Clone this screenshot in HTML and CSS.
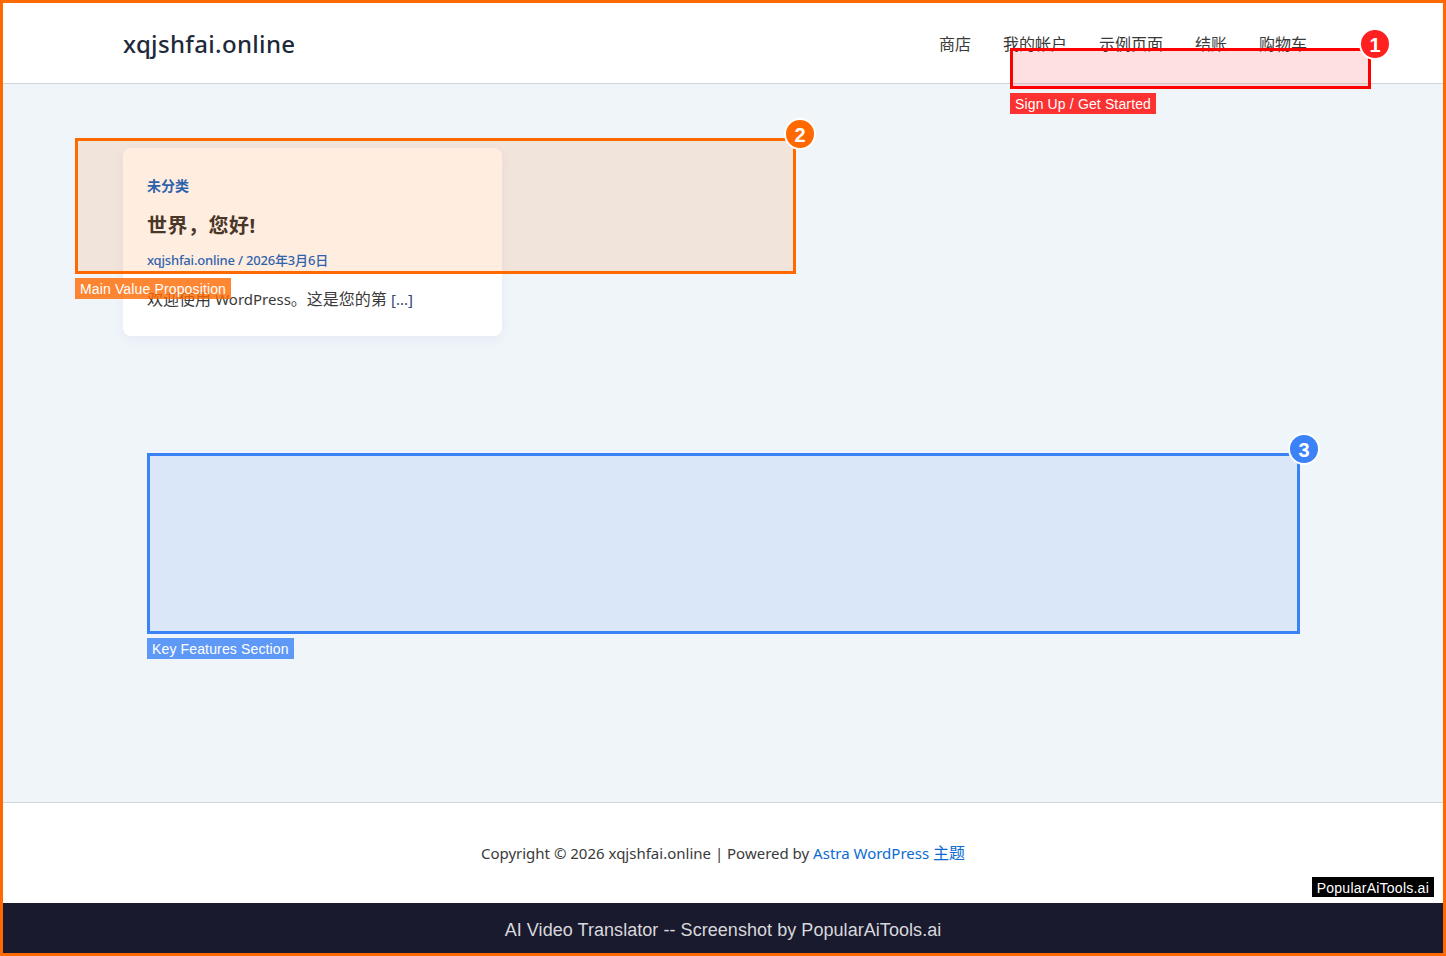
FILE: index.html
```html
<!DOCTYPE html>
<html lang="zh-CN">
<head>
<meta charset="utf-8">
<title>xqjshfai.online</title>
<link rel="stylesheet" href="styles.css">
</head>
<body>
<div class="page">
  <header class="site-header">
    <a class="logo" href="#">xqjshfai.online</a>
    <nav class="nav">
      <a href="#">商店</a>
      <a href="#">我的帐户</a>
      <a href="#">示例页面</a>
      <a href="#">结账</a>
      <a href="#">购物车</a>
    </nav>
  </header>
  <main class="content">
    <article class="card">
      <a class="category" href="#">未分类</a>
      <h2 class="title">世界，您好!</h2>
      <p class="meta">xqjshfai.online / 2026年3月6日</p>
      <p class="excerpt">欢迎使用 <span class="latin">WordPress</span>。这是您的第 <span class="more">[...]</span></p>
    </article>
  </main>
  <footer class="site-footer">
    <p>Copyright © 2026 xqjshfai.online | Powered by <a href="#">Astra WordPress <span class="cjk">主题</span></a></p>
  </footer>
  <div class="caption">AI Video Translator -- Screenshot by PopularAiTools.ai</div>
</div>

<div class="note note-red">
  <span class="badge">1</span>
  <span class="note-label">Sign Up / Get Started</span>
</div>
<div class="note note-orange">
  <span class="badge">2</span>
  <span class="note-label">Main Value Proposition</span>
</div>
<div class="note note-blue">
  <span class="badge">3</span>
  <span class="note-label">Key Features Section</span>
</div>
<div class="watermark">PopularAiTools.ai</div>
<div class="frame"></div>
</body>
</html>
```
FILE: styles.css
```css
* { box-sizing: border-box; }
html, body { margin: 0; padding: 0; }
body {
  position: relative;
  width: 1446px;
  height: 956px;
  overflow: hidden;
  font-family: "Noto Sans", "Noto Sans CJK SC", sans-serif;
  color: #3a3a3a;
  background: #f0f5fa;
}
a { text-decoration: none; color: inherit; }
p, h2 { margin: 0; }

.page {
  display: flex;
  flex-direction: column;
  height: 956px;
  padding: 3px;
}

.site-header {
  flex: none;
  height: 81px;
  display: flex;
  align-items: center;
  justify-content: space-between;
  padding: 0 136px 0 120px;
  background: #fff;
  border-bottom: 1px solid #d1d5db;
}
.logo {
  font-size: 24px;
  font-weight: 500;
  letter-spacing: 0.33px;
  color: #1e293b;
}
.nav {
  display: flex;
  gap: 32px;
  margin-top: -1px;
  font-size: 16px;
  color: #3a3a3a;
}

.content {
  flex: 1;
  padding: 64px 120px;
}
.card {
  width: 379px;
  height: 188px;
  padding: 24px;
  background: #fff;
  border-radius: 8px;
  box-shadow: 0 4px 12px rgba(30, 60, 110, 0.05);
}
.category {
  display: block;
  font-size: 14px;
  line-height: 28px;
  font-weight: 600;
  color: #0f62c4;
}
.title {
  margin-top: 12px;
  font-size: 20px;
  line-height: 28px;
  font-weight: 700;
  letter-spacing: 0.5px;
  color: #303030;
}
.meta {
  margin-top: 10px;
  font-size: 13px;
  line-height: 20px;
  font-weight: 500;
  letter-spacing: -0.19px;
  color: #0f62c4;
}
.excerpt {
  margin-top: 17px;
  font-size: 16px;
  line-height: 24px;
  color: #3a3a3a;
}
.latin { font-size: 15px; }
.more { font-size: 15px; color: #2c4a72; }

.site-footer {
  flex: none;
  height: 101px;
  padding-top: 38px;
  background: #fff;
  border-top: 1px solid #d1d5db;
  text-align: center;
  font-size: 15px;
  line-height: 24px;
  color: #3a3a3a;
}
.site-footer a { color: #0d6bd0; }
.cjk { font-size: 16px; }

.caption {
  flex: none;
  height: 50px;
  display: flex;
  align-items: center;
  justify-content: center;
  padding-top: 5px;
  background: #1a1a2e;
  color: #d8d8dc;
  font-family: "Liberation Sans", sans-serif;
  font-size: 18px;
  letter-spacing: 0.05px;
}

.note {
  position: absolute;
  border-style: solid;
  border-width: 3px;
}
.note-red {
  left: 1010px; top: 48px; width: 361px; height: 41px;
  border-color: #ff0000;
  background: rgba(255, 0, 0, 0.12);
  --accent: #ff2020;
  --tag: rgba(255, 0, 0, 0.8);
}
.note-orange {
  left: 75px; top: 138px; width: 721px; height: 136px;
  border-color: #ff6900;
  background: rgba(255, 105, 0, 0.12);
  --accent: #ff6900;
  --tag: rgba(255, 105, 0, 0.8);
}
.note-blue {
  left: 147px; top: 453px; width: 1153px; height: 181px;
  border-color: #3b82f6;
  background: rgba(59, 130, 246, 0.12);
  --accent: #3b82f6;
  --tag: rgba(59, 130, 246, 0.8);
}
.badge {
  position: absolute;
  top: -23px;
  right: -23px;
  width: 32px;
  height: 32px;
  display: flex;
  align-items: center;
  justify-content: center;
  padding-top: 2px;
  border: 2px solid #fff;
  border-radius: 50%;
  background: var(--accent);
  color: #fff;
  font-family: "Liberation Sans", sans-serif;
  font-size: 20px;
  font-weight: 700;
  line-height: 1;
}
.note-label {
  position: absolute;
  left: -3px;
  top: 100%;
  margin-top: 7px;
  padding: 1px 5px 0;
  height: 21px;
  line-height: 21px;
  white-space: nowrap;
  background: var(--tag);
  color: #fff;
  font-family: "Liberation Sans", sans-serif;
  font-size: 14px;
  letter-spacing: 0.14px;
}
.watermark {
  position: absolute;
  right: 12px;
  top: 877px;
  height: 20px;
  padding: 1px 5px 0;
  line-height: 21px;
  background: #000;
  color: #fff;
  font-family: "Liberation Sans", sans-serif;
  font-size: 14px;
  letter-spacing: 0.24px;
}
.frame {
  position: absolute;
  inset: 0;
  border: 3px solid #ff6900;
  pointer-events: none;
}
```
